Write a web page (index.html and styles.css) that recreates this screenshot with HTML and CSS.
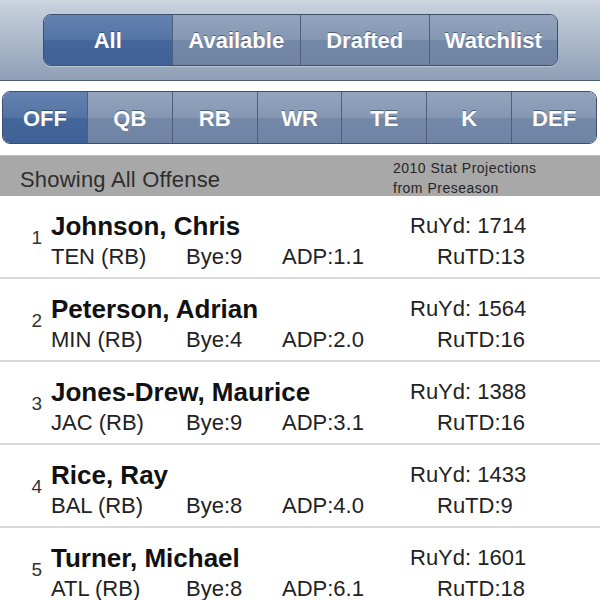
FILE: index.html
```html
<!DOCTYPE html>
<html>
<head>
<meta charset="utf-8">
<link rel="stylesheet" href="styles.css">
</head>
<body>
<div class="topbar">
  <div class="seg seg-main">
    <div class="seg-item on">All</div>
    <div class="seg-item">Available</div>
    <div class="seg-item">Drafted</div>
    <div class="seg-item">Watchlist</div>
  </div>
</div>
<div class="poswrap">
  <div class="seg seg-pos">
    <div class="seg-item on">OFF</div>
    <div class="seg-item">QB</div>
    <div class="seg-item">RB</div>
    <div class="seg-item">WR</div>
    <div class="seg-item">TE</div>
    <div class="seg-item">K</div>
    <div class="seg-item">DEF</div>
  </div>
</div>
<div class="header">
  <div class="header-title">Showing All Offense</div>
  <div class="header-note">2010 Stat Projections<br>from Preseason</div>
</div>
<div class="list">
  <div class="row">
    <div class="num">1</div><div class="name">Johnson, Chris</div><div class="stat1">RuYd: 1714</div>
    <div class="team">TEN (RB)</div><div class="bye">Bye:9</div><div class="adp">ADP:1.1</div><div class="stat2">RuTD:13</div>
  </div>
  <div class="row">
    <div class="num">2</div><div class="name">Peterson, Adrian</div><div class="stat1">RuYd: 1564</div>
    <div class="team">MIN (RB)</div><div class="bye">Bye:4</div><div class="adp">ADP:2.0</div><div class="stat2">RuTD:16</div>
  </div>
  <div class="row">
    <div class="num">3</div><div class="name">Jones-Drew, Maurice</div><div class="stat1">RuYd: 1388</div>
    <div class="team">JAC (RB)</div><div class="bye">Bye:9</div><div class="adp">ADP:3.1</div><div class="stat2">RuTD:16</div>
  </div>
  <div class="row">
    <div class="num">4</div><div class="name">Rice, Ray</div><div class="stat1">RuYd: 1433</div>
    <div class="team">BAL (RB)</div><div class="bye">Bye:8</div><div class="adp">ADP:4.0</div><div class="stat2">RuTD:9</div>
  </div>
  <div class="row">
    <div class="num">5</div><div class="name">Turner, Michael</div><div class="stat1">RuYd: 1601</div>
    <div class="team">ATL (RB)</div><div class="bye">Bye:8</div><div class="adp">ADP:6.1</div><div class="stat2">RuTD:18</div>
  </div>
</div>
</body>
</html>
```
FILE: styles.css
```css
html, body {
  margin: 0;
  padding: 0;
  background: #ffffff;
  font-family: "Liberation Sans", Arial, sans-serif;
  width: 600px;
  overflow: hidden;
}

.topbar {
  height: 81px;
  box-sizing: border-box;
  padding-top: 14px;
  padding-left: 43px;
  background: linear-gradient(to bottom, #cbd4df 0%, #aebbcc 45%, #8e9fb6 100%);
  border-bottom: 1px solid #4a596d;
}

.seg {
  display: flex;
  box-sizing: border-box;
  border: 1px solid #3f506b;
  border-radius: 8px;
  overflow: hidden;
  box-shadow: 0 1px 0 rgba(255,255,255,0.35);
}

.seg-main {
  width: 515px;
  height: 52px;
}

.seg-item {
  flex: 1 1 0;
  display: flex;
  align-items: center;
  justify-content: center;
  padding-top: 2px;
  color: #ffffff;
  font-weight: bold;
  font-size: 22px;
  text-shadow: 0 -1px 0 rgba(30,45,70,0.55);
  background: linear-gradient(to bottom, #93a4bd 0%, #8497b3 50%, #7489a8 51%, #6f84a4 100%);
  border-left: 1px solid #4d5f7d;
}

.seg-item:first-child {
  border-left: none;
}

.seg-item.on {
  background: linear-gradient(to bottom, #6482b0 0%, #5474a5 50%, #44669a 51%, #3f6196 100%);
}

.poswrap {
  padding: 10px 3px 11px 2px;
}

.seg-pos {
  height: 53px;
}

.header {
  height: 41px;
  display: flex;
  background: #a8a8a8;
  border-top: 1px solid #bdbdbd;
  box-sizing: border-box;
}

.header-title {
  width: 373px;
  padding-left: 20px;
  padding-top: 9px;
  font-size: 22px;
  line-height: 30px;
  color: #2e2e2e;
  letter-spacing: 0.2px;
}

.header-note {
  padding-top: 2px;
  font-size: 14px;
  letter-spacing: 0.5px;
  line-height: 20px;
  color: #262626;
}

.row {
  display: grid;
  grid-template-columns: 51px 135px 96px 128px 1fr;
  grid-template-rows: 30px 26px;
  row-gap: 3px;
  height: 83px;
  box-sizing: border-box;
  padding-top: 15px;
  border-bottom: 2px solid #dadada;
  color: #1a1a1a;
}

.num {
  grid-column: 1;
  grid-row: 1 / 3;
  align-self: start;
  margin-top: 17px;
  padding-right: 9px;
  text-align: right;
  font-size: 19px;
  line-height: 20px;
  color: #333;
}

.name {
  grid-column: 2 / 5;
  grid-row: 1;
  font-weight: bold;
  font-size: 26px;
  line-height: 30px;
  color: #111;
  white-space: nowrap;
}

.stat1, .team, .bye, .adp, .stat2 {
  font-size: 22px;
  white-space: nowrap;
  color: #222;
}

.stat1 {
  grid-column: 5;
  grid-row: 1;
  line-height: 30px;
}

.team {
  grid-column: 2;
  grid-row: 2;
  line-height: 26px;
}

.bye {
  grid-column: 3;
  grid-row: 2;
  line-height: 26px;
}

.adp {
  grid-column: 4;
  grid-row: 2;
  line-height: 26px;
}

.stat2 {
  grid-column: 5;
  grid-row: 2;
  line-height: 26px;
  padding-left: 27px;
}
```
